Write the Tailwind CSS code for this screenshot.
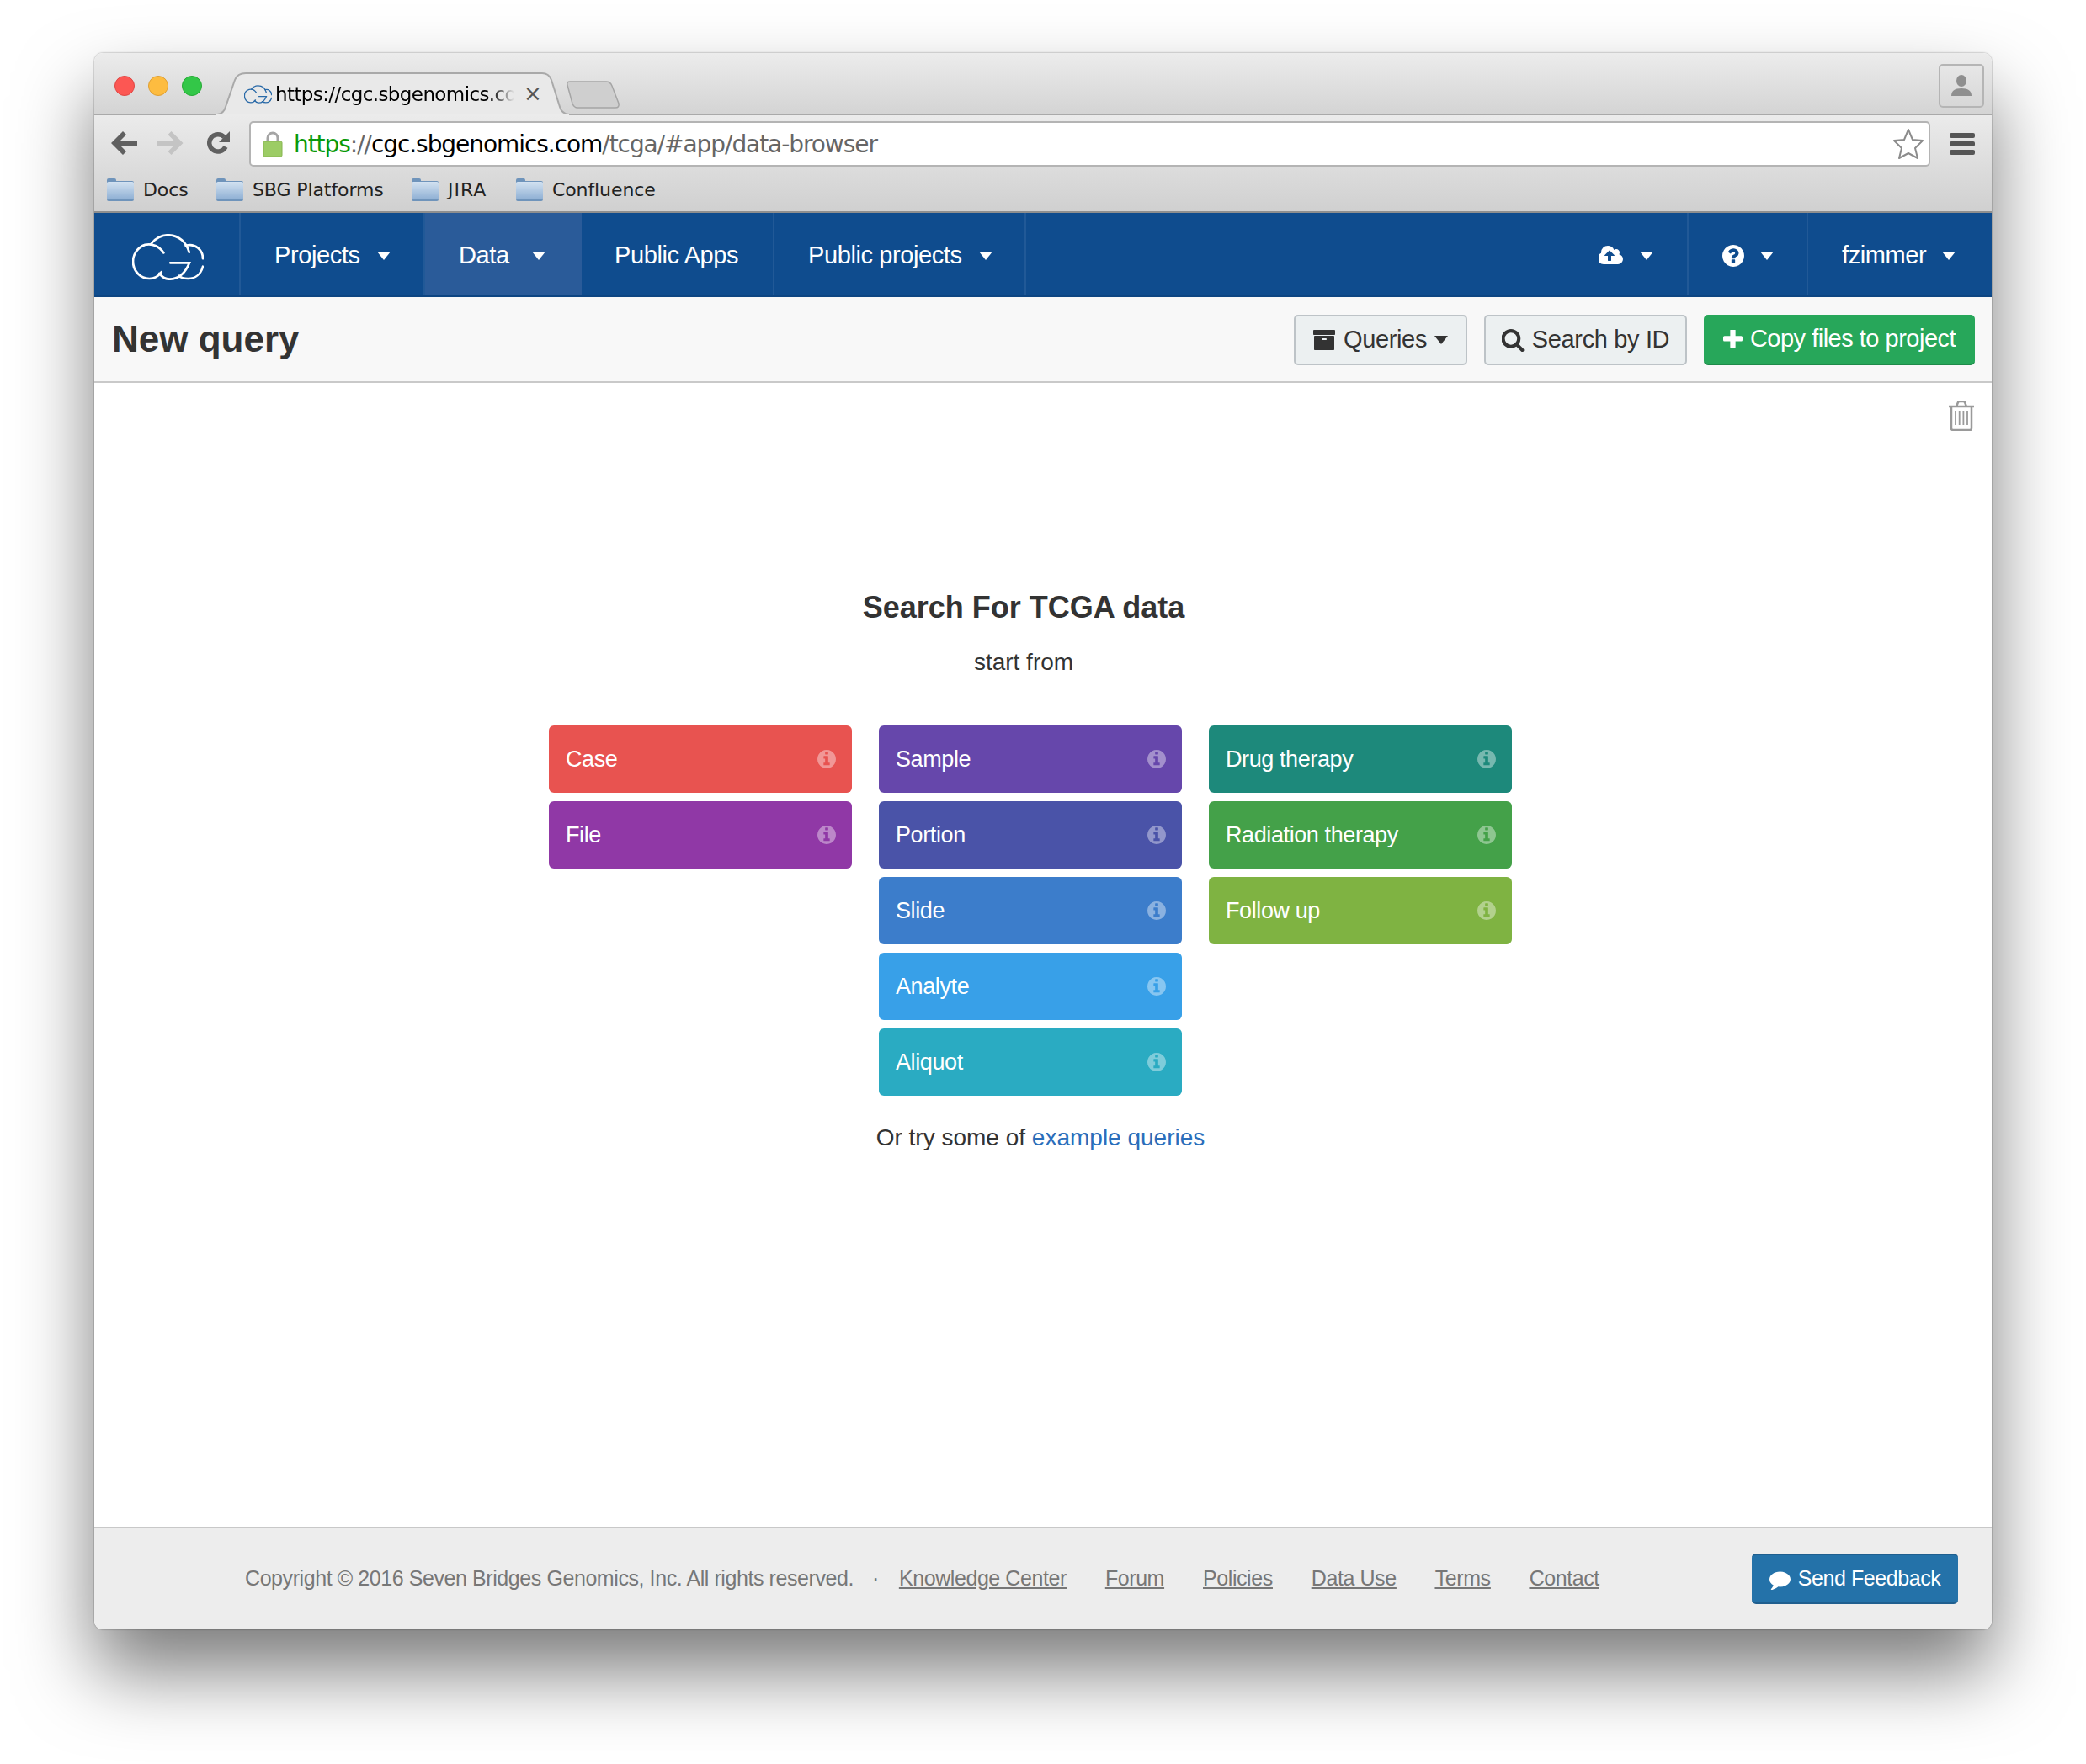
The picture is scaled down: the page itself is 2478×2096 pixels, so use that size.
<!DOCTYPE html>
<html lang="en">
<head>
    <meta charset="UTF-8">
    <title>New query - CGC</title>
    <script src="https://cdn.jsdelivr.net/npm/@tailwindcss/browser@4"></script>
</head>
<body class="bg-white font-['Liberation_Sans',Arial,sans-serif] w-[2478px] h-[2096px] overflow-hidden">
<svg class="absolute w-0 h-0">
    <defs>
        <linearGradient id="fbody" x1="0" y1="0" x2="0" y2="1"><stop offset="0" stop-color="#d3e2f1"/><stop offset="1" stop-color="#8fb0d4"/></linearGradient>
    </defs>
    <symbol id="cloud" viewBox="85 55 250 160" fill="none" stroke-linecap="round">
        <path d="M195 120C180 97 155 86 130 92C105 100 88 125 88 150C88 185 115 210 145 210C165 210 178 200 187 187"/>
        <path d="M150 90C165 68 190 58 210 58C250 58 275 85 284 118"/>
        <path d="M272 95C305 85 332 110 332 140"/>
        <path d="M332 168C325 195 305 210 280 210C265 210 255 207 248 200"/>
        <path d="M218 155H285C275 180 255 212 215 212C200 212 190 205 180 192"/>
    </symbol>
    <symbol id="info" viewBox="128 128 1536 1536">
        <path fill-rule="evenodd" d="M1152 1376v-160q0-14-9-23t-23-9h-96v-512q0-14-9-23t-23-9h-320q-14 0-23 9t-9 23v160q0 14 9 23t23 9h96v320h-96q-14 0-23 9t-9 23v160q0 14 9 23t23 9h448q14 0 23-9t9-23zm-128-896v-160q0-14-9-23t-23-9h-192q-14 0-23 9t-9 23v160q0 14 9 23t23 9h192q14 0 23-9t9-23zm640 416q0 209-103 385.5t-279.5 279.5-385.5 103-385.5-103-279.5-279.5-103-385.5 103-385.5 279.5-279.5 385.5-103 385.5 103 279.5 279.5 103 385.5z"/>
    </symbol>
    <symbol id="folder" viewBox="0 0 32 27">
        <path d="M0 5V2q0-2 2-2h7q2 0 2 2v1h19q2 0 2 2v20q0 2-2 2H2q-2 0-2-2z" fill="#6f94bb"/>
        <path d="M0 6q0-2 2-2h28q2 0 2 2v19H0z" fill="url(#fbody)"/>
    </symbol>
</svg>

<div class="pt-[63px] pl-[112px]">
    <div class="relative w-[2254px] h-[1873px] flex flex-col rounded-[10px] overflow-hidden bg-white">

        <!-- tab strip -->
        <div class="relative h-[74px] shrink-0 bg-gradient-to-b from-[#ececec] to-[#d4d4d4] border-b-2 border-[#a9a9a9]">
            <div class="absolute left-[24px] top-[27px] w-[24px] h-[24px] rounded-full bg-[#fc5753] border border-[#df4744]"></div>
            <div class="absolute left-[64px] top-[27px] w-[24px] h-[24px] rounded-full bg-[#fdbc40] border border-[#de9f34]"></div>
            <div class="absolute left-[104px] top-[27px] w-[24px] h-[24px] rounded-full bg-[#33c748] border border-[#27aa35]"></div>
            <svg class="absolute left-[141px] top-[23px]" width="426" height="51" viewBox="0 0 426 51">
                <path d="M2 50H5Q13 49 15 41L26 9Q29 1 39 1H391Q399 1 402 9L412 41Q414 49 423 50" fill="#e9e9e9" stroke="#a9a9a9" stroke-width="2"/>
                <path d="M3 51H423" stroke="#ebebeb" stroke-width="3"/>
            </svg>
            <svg class="absolute left-[560px] top-[33px]" width="66" height="33" viewBox="0 0 66 33">
                <path d="M2 5Q1 1 5 1H48Q53 1 55 6L63 27Q64 32 59 32H14Q10 32 8 27z" fill="#cfcfcf" stroke="#a5a5a5" stroke-width="1.5"/>
            </svg>
            <svg class="absolute left-[178px] top-[38px] stroke-[#2a6aa8] stroke-[10]" width="33" height="22"><use href="#cloud"/></svg>
            <span class="absolute left-[215px] top-[34px] w-[284px] overflow-hidden whitespace-nowrap text-[23px] leading-[30px] text-black font-['DejaVu_Sans',sans-serif] tracking-[-0.6px] [mask-image:linear-gradient(to_right,black_90%,transparent)]">https://cgc.sbgenomics.com</span>
            <span class="absolute left-[510px] top-[33px] text-[26px] leading-[30px] text-[#555] font-['DejaVu_Sans',sans-serif]">×</span>
            <div class="absolute left-[2191px] top-[13px] w-[54px] h-[52px] rounded-[5px] border-2 border-[#b5b5b5] flex items-center justify-center">
                <svg width="26" height="26" viewBox="0 0 26 26" fill="#8f8f8f"><ellipse cx="13" cy="7" rx="6" ry="7"/><path d="M1 25q0-9 12-9t12 9z"/></svg>
            </div>
        </div>

        <!-- toolbar + bookmarks -->
        <div class="h-[116px] shrink-0 bg-gradient-to-b from-[#ebebeb] to-[#d0d0d0] border-b-2 border-[#8f8f8f] flex flex-col">
            <div class="h-[63px] flex items-start">
                <svg class="mt-[19px] ml-[20px]" width="31" height="28" viewBox="0 0 31 28" fill="#606060"><path d="M14 0 0 14l14 14 4-4-7-7h20v-6H11l7-7z"/></svg>
                <svg class="mt-[19px] ml-[23px]" width="32" height="28" viewBox="0 0 31 28" fill="#c4c4c4"><path d="M17 0l14 14-14 14-4-4 7-7H0v-6h20l-7-7z"/></svg>
                <svg class="mt-[19px] ml-[28px]" width="28" height="28" viewBox="0 0 28 28" fill="none"><path d="M22 18.5A10.2 10.2 0 1 1 20.500 7" stroke="#606060" stroke-width="5.500"/><path d="M27 0v13H14z" fill="#606060"/></svg>
                <div class="relative mt-[7px] ml-[22px] w-[1997px] h-[54px] bg-white rounded-[5px] border-2 border-[#b4b4b4] flex items-center">
                    <svg class="ml-[14px]" width="24" height="30" viewBox="0 0 24 30"><path d="M6 14V8a6 6 0 0 1 12 0v6" fill="none" stroke="#a5a5a5" stroke-width="3"/><rect x="1" y="12" width="22" height="18" rx="1.500" fill="#9ccc65" stroke="#86b451"/></svg>
                    <span class="ml-[13px] pt-[2px] text-[28px] font-['DejaVu_Sans',sans-serif] tracking-[-1.06px] whitespace-nowrap text-[#666]"><span class="text-[#0a9a0a]">https</span>://<span class="text-black">cgc.sbgenomics.com</span>/tcga/#app/data-browser</span>
                    <svg class="absolute right-[6px] top-[6px]" width="36" height="38" viewBox="0 0 36 38" fill="#fff" stroke="#8c8c8c" stroke-width="2"><path d="M18 2l5 12 12 1-9 9 3 12-11-6-11 6 3-12-9-9 12-1z" stroke-linejoin="round"/></svg>
                </div>
                <div class="mt-[21px] ml-[23px] flex flex-col gap-[4px]">
                    <div class="w-[30px] h-[6px] rounded-[2px] bg-[#555]"></div>
                    <div class="w-[30px] h-[6px] rounded-[2px] bg-[#555]"></div>
                    <div class="w-[30px] h-[6px] rounded-[2px] bg-[#555]"></div>
                </div>
            </div>
            <div class="flex items-center pl-[15px] h-[34px] mt-[8px] text-[22px] text-[#222] font-['DejaVu_Sans',sans-serif] tracking-[-0.1px]">
                <svg width="32" height="27"><use href="#folder"/></svg>
                <span class="ml-[11px] w-[87px]">Docs</span>
                <svg width="32" height="27"><use href="#folder"/></svg>
                <span class="ml-[11px] w-[189px] whitespace-nowrap">SBG Platforms</span>
                <svg width="32" height="27"><use href="#folder"/></svg>
                <span class="ml-[11px] w-[81px] tracking-[1px]">JIRA</span>
                <svg width="32" height="27"><use href="#folder"/></svg>
                <span class="ml-[11px]">Confluence</span>
            </div>
        </div>

        <!-- app nav -->
        <nav class="h-[100px] shrink-0 bg-[#0f4c8e] flex text-white text-[29px] tracking-[-0.4px] border-b-2 border-[#0d4582]">
            <div class="w-[174px] border-r-2 border-[#215997] flex items-center justify-center pl-[3px] pt-[7px]">
                <svg class="stroke-white stroke-[8]" width="85" height="55"><use href="#cloud"/></svg>
            </div>
            <a class="w-[219px] border-r-2 border-[#215997] flex items-center pl-[40px] pt-[3px]">Projects<i class="ml-[20px] border-x-[8px] border-t-[10px] border-x-transparent border-t-white"></i></a>
            <a class="w-[186px] bg-[#2a5b99] flex items-center pl-[40px] pt-[3px]">Data<i class="ml-[27px] border-x-[8px] border-t-[10px] border-x-transparent border-t-white"></i></a>
            <a class="w-[229px] border-r-2 border-[#215997] flex items-center pl-[39px] pt-[3px]">Public Apps</a>
            <a class="w-[299px] border-r-2 border-[#215997] flex items-center pl-[40px] pt-[3px]">Public projects<i class="ml-[20px] border-x-[8px] border-t-[10px] border-x-transparent border-t-white"></i></a>
            <div class="ml-auto flex">
                <a class="w-[142px] border-r-2 border-[#215997] flex items-center pl-[35px] pt-[3px]">
                    <svg width="30" height="28" viewBox="0 0 1920 1792" fill="#fff"><path d="M1216 864q0-14-9-23l-352-352q-9-9-23-9t-23 9l-351 351q-10 12-10 24 0 14 9 23t23 9h224v352q0 13 9.500 22.500t22.500 9.500h192q13 0 22.500-9.500t9.500-22.500v-352h224q13 0 22.500-9.500t9.500-22.500zm640 288q0 159-112.500 271.500t-271.500 112.500h-1088q-185 0-316.500-131.500t-131.500-316.500q0-130 70-240t188-165q-2-30-2-43 0-212 150-362t362-150q156 0 285.500 87t188.500 231q71-62 166-62 106 0 181 75t75 181q0 76-41 138 130 31 213.500 135.500t83.500 238.500z"/></svg>
                    <i class="ml-[19px] border-x-[8px] border-t-[10px] border-x-transparent border-t-white"></i>
                </a>
                <a class="w-[142px] border-r-2 border-[#215997] flex items-center pl-[40px] pt-[3px]">
                    <svg width="26" height="26" viewBox="128 128 1536 1536" fill="#fff"><path fill-rule="evenodd" d="M1024 1376v-192q0-14-9-23t-23-9h-192q-14 0-23 9t-9 23v192q0 14 9 23t23 9h192q14 0 23-9t9-23zm256-672q0-88-55.500-163t-138.500-116-170-41q-243 0-371 213-15 24 8 42l132 100q7 6 19 6 16 0 25-12 53-68 86-92 34-24 86-24 48 0 85.500 26t37.500 59q0 38-20 61t-68 45q-63 28-115.500 86.500t-52.500 125.500v36q0 14 9 23t23 9h192q14 0 23-9t9-23q0-19 21.500-49.500t54.500-49.500q32-18 49-28.500t46-35 44.500-48 28-60.500 12.500-81zm384 192q0 209-103 385.500t-279.500 279.500-385.500 103-385.500-103-279.500-279.500-103-385.500 103-385.500 279.500-279.500 385.500-103 385.500 103 279.500 279.500 103 385.500z"/></svg>
                    <i class="ml-[19px] border-x-[8px] border-t-[10px] border-x-transparent border-t-white"></i>
                </a>
                <a class="w-[218px] flex items-center pl-[40px] pt-[3px]">fzimmer<i class="ml-[19px] border-x-[8px] border-t-[10px] border-x-transparent border-t-white"></i></a>
            </div>
        </nav>

        <!-- page header -->
        <div class="h-[102px] shrink-0 bg-[#f8f8f8] border-b-2 border-[#c9c9c9] flex items-center pl-[21px] pr-[20px]">
            <h1 class="text-[44px] font-bold text-[#333]">New query</h1>
            <div class="ml-auto flex gap-[20px] text-[29px] tracking-[-0.35px] text-[#333] mt-[2px]">
                <button class="w-[206px] h-[60px] rounded-[5px] bg-[#ecf0f1] border-2 border-[#bdc3c7] flex items-center justify-center">
                    <svg width="26" height="26" viewBox="64 128 1664 1536" fill="#333"><path fill-rule="evenodd" d="M1088 832q0-26-19-45t-45-19h-256q-26 0-45 19t-19 45 19 45 45 19h256q26 0 45-19t19-45zm576-192v960q0 26-19 45t-45 19h-1408q-26 0-45-19t-19-45v-960q0-26 19-45t45-19h1408q26 0 45 19t19 45zm64-448v256q0 26-19 45t-45 19h-1536q-26 0-45-19t-19-45v-256q0-26 19-45t45-19h1536q26 0 45 19t19 45z"/></svg>
                    <span class="ml-[10px]">Queries</span>
                    <i class="ml-[9px] border-x-[8px] border-t-[10px] border-x-transparent border-t-[#333]"></i>
                </button>
                <button class="w-[241px] h-[60px] rounded-[5px] bg-[#ecf0f1] border-2 border-[#bdc3c7] flex items-center justify-center">
                    <svg width="27" height="27" viewBox="128 128 1600 1664" fill="#333"><path fill-rule="evenodd" d="M1216 832q0-185-131.500-316.500t-316.500-131.500-316.500 131.500-131.500 316.500 131.500 316.500 316.500 131.500 316.500-131.500 131.500-316.500zm512 832q0 52-38 90t-90 38q-54 0-90-38l-343-342q-179 124-399 124-143 0-273.500-55.500t-225-150-150-225-55.500-273.500 55.500-273.500 150-225 225-150 273.500-55.500 273.500 55.500 225 150 150 225 55.500 273.500q0 220-124 399l343 343q37 37 37 90z"/></svg>
                    <span class="ml-[9px]">Search by ID</span>
                </button>
                <button class="w-[322px] h-[60px] rounded-[5px] bg-[#27a75a] border-b-2 border-[#1f8a4a] text-white flex items-center justify-center">
                    <svg width="23" height="23" viewBox="192 192 1408 1408" fill="#fff"><path d="M1600 736v192q0 40-28 68t-68 28h-416v416q0 40-28 68t-68 28h-192q-40 0-68-28t-28-68v-416h-416q-40 0-68-28t-28-68v-192q0-40 28-68t68-28h416v-416q0-40 28-68t68-28h192q40 0 68 28t28 68v416h416q40 0 68 28t28 68z"/></svg>
                    <span class="ml-[9px] tracking-[-0.5px]">Copy files to project</span>
                </button>
            </div>
        </div>

        <!-- main -->
        <main class="relative flex-1 bg-white">
            <svg class="absolute right-[20px] top-[21px]" width="32" height="36" viewBox="0 0 32 36" fill="none" stroke="#9a9a9a" stroke-width="2.500"><path d="M1 7h30M10 7l2-5q.5-1 2-1h4q1.500 0 2 1l2 5M4 7v26q0 2 2 2h20q2 0 2-2V7"/><path d="M10 12v17M14.700 12v17M19.400 12v17M24 12v17" stroke-width="1.800" transform="translate(-1 0)"/></svg>
            <div class="w-[2208px] pt-[246px] text-center text-[#333]">
                <h2 class="text-[36px] leading-[42px] font-bold">Search For TCGA data</h2>
                <p class="mt-[26px] text-[28px] leading-[36px]">start from</p>
            </div>
            <div class="mt-[57px] ml-[540px] flex gap-[32px] text-[27px] text-white items-start tracking-[-0.4px]">
                <div class="w-[360px] flex flex-col gap-[10px]">
                    <a class="h-[80px] rounded-[6px] bg-[#e85350] flex items-center justify-between pl-[20px] pr-[19px]">Case<svg width="22" height="22" class="fill-white/40"><use href="#info"/></svg></a>
                    <a class="h-[80px] rounded-[6px] bg-[#9038a6] flex items-center justify-between pl-[20px] pr-[19px]">File<svg width="22" height="22" class="fill-white/40"><use href="#info"/></svg></a>
                </div>
                <div class="w-[360px] flex flex-col gap-[10px]">
                    <a class="h-[80px] rounded-[6px] bg-[#6647ab] flex items-center justify-between pl-[20px] pr-[19px]">Sample<svg width="22" height="22" class="fill-white/40"><use href="#info"/></svg></a>
                    <a class="h-[80px] rounded-[6px] bg-[#4a53a8] flex items-center justify-between pl-[20px] pr-[19px]">Portion<svg width="22" height="22" class="fill-white/40"><use href="#info"/></svg></a>
                    <a class="h-[80px] rounded-[6px] bg-[#3c7dcb] flex items-center justify-between pl-[20px] pr-[19px]">Slide<svg width="22" height="22" class="fill-white/40"><use href="#info"/></svg></a>
                    <a class="h-[80px] rounded-[6px] bg-[#38a0e8] flex items-center justify-between pl-[20px] pr-[19px]">Analyte<svg width="22" height="22" class="fill-white/40"><use href="#info"/></svg></a>
                    <a class="h-[80px] rounded-[6px] bg-[#2aabc2] flex items-center justify-between pl-[20px] pr-[19px]">Aliquot<svg width="22" height="22" class="fill-white/40"><use href="#info"/></svg></a>
                </div>
                <div class="w-[360px] flex flex-col gap-[10px]">
                    <a class="h-[80px] rounded-[6px] bg-[#1d897b] flex items-center justify-between pl-[20px] pr-[19px]">Drug therapy<svg width="22" height="22" class="fill-white/40"><use href="#info"/></svg></a>
                    <a class="h-[80px] rounded-[6px] bg-[#44a149] flex items-center justify-between pl-[20px] pr-[19px]">Radiation therapy<svg width="22" height="22" class="fill-white/40"><use href="#info"/></svg></a>
                    <a class="h-[80px] rounded-[6px] bg-[#7fb342] flex items-center justify-between pl-[20px] pr-[19px]">Follow up<svg width="22" height="22" class="fill-white/40"><use href="#info"/></svg></a>
                </div>
            </div>
            <p class="w-[2248px] mt-[32px] text-center text-[28px] leading-[36px] text-[#333]">Or try some of <a class="text-[#2a6ebb]">example queries</a></p>
        </main>

        <!-- footer -->
        <footer class="h-[122px] shrink-0 bg-[#ededed] border-t-2 border-[#c8c8c8] flex items-center pl-[179px] pr-[40px] text-[25px] text-[#777] tracking-[-0.42px]">
            <span>Copyright © 2016 Seven Bridges Genomics, Inc. All rights reserved.</span>
            <span class="ml-[22px]">·</span>
            <div class="ml-[24px] flex gap-[46px] underline">
                <a>Knowledge Center</a><a>Forum</a><a>Policies</a><a>Data Use</a><a>Terms</a><a>Contact</a>
            </div>
            <button class="ml-auto w-[245px] h-[60px] rounded-[5px] bg-[#2472a9] border-y-2 border-[#1f5f8f] text-white flex items-center justify-center">
                <svg width="25" height="25" viewBox="0 128 1792 1536" fill="#fff"><path d="M1792 896q0 174-120 321.500t-326 233-450 85.500q-70 0-145-8-198 175-460 242-49 14-114 22-17 2-30.500-9t-17.500-29v-1q-3-4-.5-12t2-10 4.500-9.500l6-9 7-8.500 8-9q7-8 31-34.500t34.500-38 31-39.500 32.500-51 27-59 26-76q-157-89-247.500-220t-90.500-281q0-130 71-248.500t191-204.500 286-136.500 348-50.500q244 0 450 85.500t326 233 120 321.500z"/></svg>
                <span class="ml-[9px]">Send Feedback</span>
            </button>
        </footer>
    </div>
</div>
<div class="absolute left-[112px] top-[63px] w-[2254px] h-[1873px] rounded-[10px] -z-10 shadow-[0_50px_90px_rgba(0,0,0,0.52),0_0_2px_rgba(0,0,0,0.5)]"></div>
</body>
</html>
